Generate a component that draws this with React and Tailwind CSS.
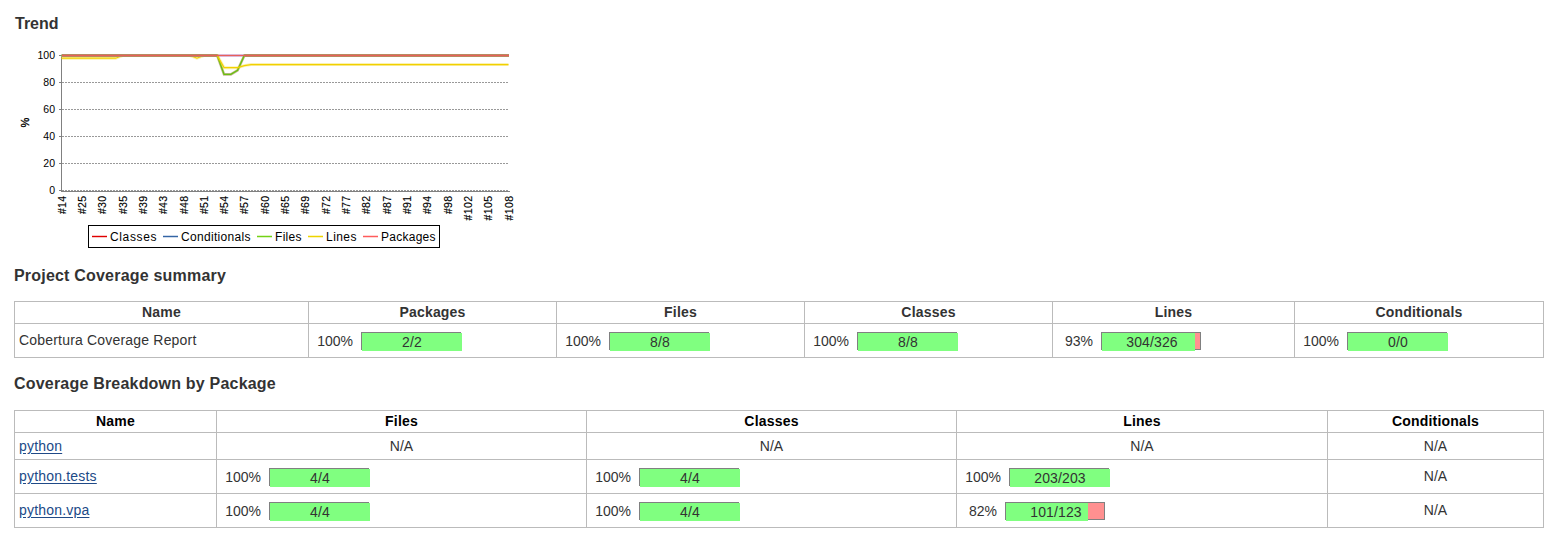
const STEP = 447 / 66;
const px = (i) => 61.5 + STEP * i;
const py = (v) => 190.5 - v * 1.35;

const toPoints = (values) => values.map((v, i) => `${px(i).toFixed(2)},${py(v).toFixed(2)}`).join(" ");
const indexes = Array.from({ length: 67 }, (_, i) => i);

const full = indexes.map(() => 100);
const files = indexes.map((i) => ({ 24: 86, 25: 86, 26: 89 })[i] ?? 100);
const lines = indexes.map((i) => {
  if (i < 9 || i === 20) return 98;
  if (i < 24) return 100;
  if (i < 27) return 91;
  if (i === 27) return 92.5;
  return 93.3;
});

const builds = [14, 25, 30, 35, 39, 43, 48, 51, 54, 57, 60, 65, 69, 72, 77, 82, 87, 91, 94, 98, 102, 105, 108];

const legend = [
  { name: "Classes", color: "#e00000", halo: "#f5b0b0", x: 92, width: 46.5 },
  { name: "Conditionals", color: "#3465a4", halo: "#b9cbe2", x: 163, width: 69.5 },
  { name: "Files", color: "#73d216", halo: "#cdf0aa", x: 257, width: 26.5 },
  { name: "Lines", color: "#edd400", halo: "#faf0a0", x: 308, width: 30.5 },
  { name: "Packages", color: "#ff5c5c", halo: "#ffc4c4", x: 363, width: 54.5 },
];

function TrendChart() {
  return (
    <svg width="520" height="215" viewBox="0 40 520 215" className="block font-['Liberation_Sans',Arial,sans-serif]">
      {[0, 20, 40, 60, 80, 100].map((v) => (
        <g key={v}>
          <line x1="62" x2="508" y1={py(v)} y2={py(v)} stroke="#999" strokeDasharray="2 1" />
          <line x1="59" x2="61" y1={py(v)} y2={py(v)} stroke="#808080" />
          <text x="55" y={py(v) + 3.7} textAnchor="end" fontSize="10.5" fill="#000">{v}</text>
        </g>
      ))}
      <line x1="61.5" x2="61.5" y1="55" y2="191" stroke="#808080" />
      <line x1="61" x2="510" y1="191.5" y2="191.5" stroke="#808080" />
      <text transform="translate(29 127.5) rotate(-90)" fontSize="11" fill="#000" stroke="#000" strokeWidth="0.35">%</text>
      {builds.map((b, i) => (
        <text
          key={b}
          transform={`translate(${px(i * 3) + 4.1} 196) rotate(-90)`}
          textAnchor="end"
          fontSize="10.5"
          textLength={b > 99 ? 24.5 : 18}
          fill="#000"
          stroke="#000"
          strokeWidth="0.15"
        >
          {`#${b}`}
        </text>
      ))}
      <polyline points={toPoints(full)} fill="none" stroke="#dcb8d8" strokeWidth="3" />
      <polyline points={toPoints(files)} fill="none" stroke="#a08a50" strokeOpacity="0.6" strokeWidth="2.6" />
      <polyline points={toPoints(files)} fill="none" stroke="#68c010" strokeWidth="1.4" />
      <polyline points={toPoints(lines)} fill="none" stroke="#edd400" strokeOpacity="0.3" strokeWidth="3" />
      <polyline points={toPoints(lines)} fill="none" stroke="#f2d000" strokeWidth="1.2" />
      <line x1="62" x2={px(23)} y1="55.5" y2="55.5" stroke="#b78a60" strokeWidth="3" />
      <line x1={px(27)} x2="509" y1="55.5" y2="55.5" stroke="#b78a60" strokeWidth="3" />
      <line x1="62" x2="509" y1="55.5" y2="55.5" stroke="#e8605a" />
      <rect x="88.5" y="225.5" width="351" height="22" fill="#fff" stroke="#000" />
      {legend.map((item) => (
        <g key={item.name}>
          <line x1={item.x} x2={item.x + 15} y1="236.5" y2="236.5" stroke={item.halo} strokeWidth="2.4" />
          <line x1={item.x} x2={item.x + 15} y1="236.5" y2="236.5" stroke={item.color} />
          <text x={item.x + 18} y="241" fontSize="12" textLength={item.width} fill="#000">{item.name}</text>
        </g>
      ))}
    </svg>
  );
}

function Coverage({ percent, ratio }) {
  return (
    <div className="flex items-start pl-2">
      <span className={`${percent === 100 ? "w-9" : "w-8"} text-right leading-[18px]`}>{percent}%</span>
      <div className="ml-2 h-[18px] w-[100px] shrink-0 border border-[#808080] bg-[#ff9090]">
        <div className="h-[18px] bg-[#80ff80]" style={{ width: `${percent}px` }}>
          <div className="w-[100px] text-center leading-[18px] tracking-[0.1px]">{ratio}</div>
        </div>
      </div>
    </div>
  );
}

function CoverageTable({ columns, rows, headClass, linked }) {
  return (
    <table className="w-[1530px] table-fixed border-separate border-spacing-0 border-t border-l border-[#bbb]">
      <colgroup>
        {columns.map((c) => (
          <col key={c.name} style={{ width: `${c.width}px` }} />
        ))}
      </colgroup>
      <thead>
        <tr className={headClass}>
          {columns.map((c) => (
            <th key={c.name} className="h-[22px] border-r border-b border-[#bbb] p-0 text-center leading-[21px] font-bold tracking-[0.2px]">
              {c.name}
            </th>
          ))}
        </tr>
      </thead>
      <tbody>
        {rows.map((row) => (
          <tr key={row.name} className={row.short ? "h-[27px]" : "h-[34px]"}>
            <td className={`border-r border-b border-[#bbb] p-0 pl-1 align-middle tracking-[0.19px] ${row.short ? "" : "pb-0.5"}`}>
              {linked ? <a href="#" className="text-[#204a87] underline underline-offset-2">{row.name}</a> : row.name}
            </td>
            {row.cells.map((cell, i) => (
              <td key={i} className={`border-r border-b border-[#bbb] p-0 text-center align-middle ${cell || row.short ? "" : "pb-0.5"}`}>
                {cell ? <Coverage percent={cell[0]} ratio={cell[1]} /> : "N/A"}
              </td>
            ))}
          </tr>
        ))}
      </tbody>
    </table>
  );
}

const summaryColumns = [
  { name: "Name", width: 294 },
  { name: "Packages", width: 248 },
  { name: "Files", width: 248 },
  { name: "Classes", width: 248 },
  { name: "Lines", width: 242 },
  { name: "Conditionals", width: 249 },
];
const summaryRows = [
  { name: "Cobertura Coverage Report", cells: [[100, "2/2"], [100, "8/8"], [100, "8/8"], [93, "304/326"], [100, "0/0"]] },
];
const packageColumns = [
  { name: "Name", width: 202 },
  { name: "Files", width: 370 },
  { name: "Classes", width: 370 },
  { name: "Lines", width: 371 },
  { name: "Conditionals", width: 216 },
];
const packageRows = [
  { name: "python", short: true, cells: [null, null, null, null] },
  { name: "python.tests", cells: [[100, "4/4"], [100, "4/4"], [100, "203/203"], null] },
  { name: "python.vpa", cells: [[100, "4/4"], [100, "4/4"], [82, "101/123"], null] },
];

export default function App() {
  return (
    <main className="h-[551px] w-[1552px] overflow-hidden bg-white font-['Liberation_Sans',Arial,sans-serif] text-sm text-[#333]">
      <h3 className="h-10 pt-[14px] pl-[15px] text-base leading-5 font-bold">Trend</h3>
      <TrendChart />
      <div className="pl-[14px]">
        <h3 className="h-[46px] pt-[11px] text-base leading-5 font-bold tracking-[0.2px]">Project Coverage summary</h3>
        <CoverageTable columns={summaryColumns} rows={summaryRows} />
        <h3 className="h-[52px] pt-[16px] text-base leading-5 font-bold tracking-[0.2px]">Coverage Breakdown by Package</h3>
        <CoverageTable columns={packageColumns} rows={packageRows} headClass="text-black" linked />
      </div>
    </main>
  );
}
